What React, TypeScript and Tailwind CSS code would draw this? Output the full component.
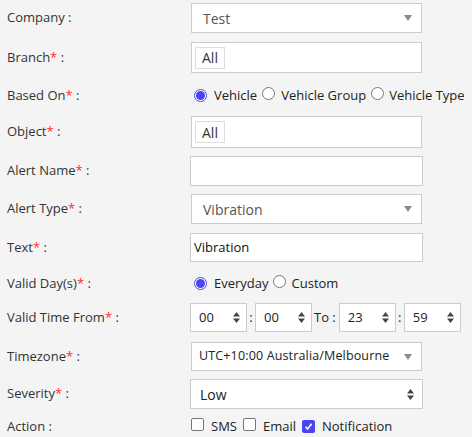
import React from "react";

const font = { fontFamily: '"Open Sans", "Liberation Sans", sans-serif' };

function Label({ text, req = true }: { text: string; req?: boolean }) {
  return (
    <div className="w-[190px] shrink-0 pl-[7px] text-[13px] text-[#333]">
      {text}
      {req && <span className="text-[#ff2a2a]">*</span>} :
    </div>
  );
}

function Caret() {
  return (
    <svg width="8" height="6" viewBox="0 0 8 6" className="shrink-0">
      <path d="M0 0 L8 0 L4 6 Z" fill="#8a8a8a" />
    </svg>
  );
}

function Spin() {
  return (
    <svg width="7" height="11" viewBox="0 0 7 11" className="shrink-0">
      <path d="M0 4.5 L3.5 0 L7 4.5 Z" fill="#444" />
      <path d="M0 6.5 L3.5 11 L7 6.5 Z" fill="#444" />
    </svg>
  );
}

function StyledSelect({ value }: { value: string }) {
  return (
    <div className="ml-[1px] flex h-full w-[231px] items-center justify-between border border-[#cccccc] bg-white pl-[11px] pr-[9px]">
      <span className="whitespace-nowrap text-[14px] text-[#555]">{value}</span>
      <Caret />
    </div>
  );
}

function TzSelect({ value }: { value: string }) {
  return (
    <div className="ml-[1px] flex h-full w-[231px] items-center justify-between border border-[#cccccc] bg-white pl-[7px] pr-[9px]">
      <span className="overflow-hidden whitespace-nowrap text-[12.5px] tracking-[0.15px] text-[#222]">
        {value}
      </span>
      <Caret />
    </div>
  );
}

function ChipInput() {
  return (
    <div className="ml-[1px] flex h-full w-[231px] items-center border border-[#cccccc] bg-white pl-[3px]">
      <div className="flex h-[22px] items-center border border-[#dddddd] px-[6px] text-[14px] text-[#333]">
        All
      </div>
    </div>
  );
}

function TimeBox({ v }: { v: string }) {
  return (
    <div className="flex h-full w-[57px] items-center justify-between border border-[#cccccc] bg-white pl-[8px] pr-[6px] text-[13px] text-[#222]">
      <span>{v}</span>
      <Spin />
    </div>
  );
}

function Radio({ checked }: { checked?: boolean }) {
  return (
    <span
      className={
        "inline-flex h-[13px] w-[13px] shrink-0 items-center justify-center rounded-full border " +
        (checked ? "border-[#4b44f2]" : "border-[#767676]") +
        " bg-white"
      }
    >
      {checked && <span className="h-[9px] w-[9px] rounded-full bg-[#4b44f2]" />}
    </span>
  );
}

function Check({ checked }: { checked?: boolean }) {
  return checked ? (
    <span className="inline-flex h-[13px] w-[13px] shrink-0 items-center justify-center rounded-[2px] bg-[#4b44f2]">
      <svg width="9" height="9" viewBox="0 0 9 9">
        <path d="M1.5 4.8 L3.6 7 L7.6 1.8" stroke="white" strokeWidth="1.6" fill="none" />
      </svg>
    </span>
  ) : (
    <span className="inline-block h-[13px] w-[13px] shrink-0 rounded-[2px] border border-[#767676] bg-white" />
  );
}

export default function App() {
  return (
    <div className="h-[437px] w-[472px] overflow-hidden bg-[#f4f4f4]" style={font}>
      <div className="flex flex-col">
        <div className="mt-[3px] flex h-[30px] items-center">
          <Label text="Company" req={false} />
          <StyledSelect value="Test" />
        </div>
        <div className="mt-[9px] flex h-[31px] items-center">
          <Label text="Branch" />
          <ChipInput />
        </div>
        <div className="mt-[11px] flex h-[24px] items-center">
          <Label text="Based On" />
          <div className="flex items-center text-[13px] text-[#222]">
            <span className="ml-[4px]"><Radio checked /></span>
            <span className="ml-[7px]">Vehicle</span>
            <span className="ml-[5px]"><Radio /></span>
            <span className="ml-[6px]">Vehicle Group</span>
            <span className="ml-[5px]"><Radio /></span>
            <span className="ml-[5px]">Vehicle Type</span>
          </div>
        </div>
        <div className="mt-[8px] flex h-[32px] items-center">
          <Label text="Object" />
          <ChipInput />
        </div>
        <div className="mt-[8px] flex h-[30px] items-center">
          <Label text="Alert Name" />
          <div className="h-full w-[233px] border border-[#cccccc] bg-white" />
        </div>
        <div className="mt-[8px] flex h-[30px] items-center">
          <Label text="Alert Type" />
          <StyledSelect value="Vibration" />
        </div>
        <div className="mt-[9px] flex h-[29px] items-center">
          <Label text="Text" />
          <div className="flex h-full w-[233px] items-center border border-[#cccccc] bg-white pl-[3px] text-[13px] text-[#111]">
            Vibration
          </div>
        </div>
        <div className="mt-[10px] flex h-[24px] items-center">
          <Label text="Valid Day(s)" />
          <div className="flex items-center text-[13px] text-[#222]">
            <span className="ml-[4px]"><Radio checked /></span>
            <span className="ml-[7px]">Everyday</span>
            <span className="ml-[4px]"><Radio /></span>
            <span className="ml-[6px]">Custom</span>
          </div>
        </div>
        <div className="mt-[7px] flex h-[29px] items-center">
          <Label text="Valid Time From" />
          <div className="flex h-full items-center text-[13px] text-[#222]">
            <TimeBox v="00" />
            <span className="w-[8px] text-center">:</span>
            <TimeBox v="00" />
            <span className="ml-[2px] mr-[3px]">To :</span>
            <TimeBox v="23" />
            <span className="w-[8px] text-center">:</span>
            <TimeBox v="59" />
          </div>
        </div>
        <div className="mt-[10px] flex h-[29px] items-center">
          <Label text="Timezone" />
          <TzSelect value="UTC+10:00 Australia/Melbourne" />
        </div>
        <div className="mt-[8px] flex h-[30px] items-center">
          <Label text="Severity" />
          <div className="flex h-full w-[233px] items-center justify-between border border-[#cccccc] bg-white pl-[9px] pr-[8px] text-[14px] text-[#222]">
            <span>Low</span>
            <Spin />
          </div>
        </div>
        <div className="mt-[6px] flex h-[24px] items-center">
          <Label text="Action" req={false} />
          <div className="flex items-center text-[13px] text-[#222]">
            <span className="ml-[1px]"><Check /></span>
            <span className="ml-[7px]">SMS</span>
            <span className="ml-[6px]"><Check /></span>
            <span className="ml-[7px]">Email</span>
            <span className="ml-[6px]"><Check checked /></span>
            <span className="ml-[7px]">Notification</span>
          </div>
        </div>
      </div>
    </div>
  );
}
